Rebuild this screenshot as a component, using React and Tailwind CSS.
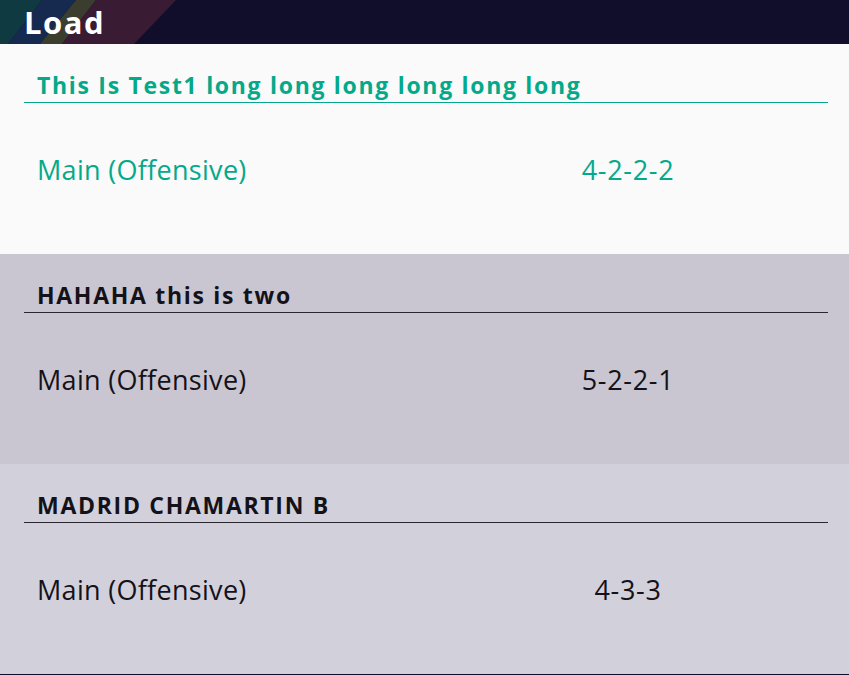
import React from 'react';

const cards = [
  { title: 'This Is Test1 long long long long long long', name: 'Main (Offensive)', formation: '4-2-2-2', active: true, bg: 'bg-[#fafafa]' },
  { title: 'HAHAHA this is two', name: 'Main (Offensive)', formation: '5-2-2-1', bg: 'bg-[#c9c6d1]' },
  { title: 'MADRID CHAMARTIN B', name: 'Main (Offensive)', formation: '4-3-3', bg: 'bg-[#d1d0db]' },
];

const Stripes = () => (
  <svg className="absolute inset-0 h-full w-[200px]" viewBox="0 0 200 44" preserveAspectRatio="none">
    <polygon points="0,0 42,0 8,44 0,44" fill="#0f3a42" />
    <polygon points="42,0 76,0 40,44 8,44" fill="#162a50" />
    <polygon points="76,0 96,0 62,44 40,44" fill="#3b3d2f" />
    <polygon points="96,0 176,0 134,44 62,44" fill="#391b33" />
  </svg>
);

const Card = ({ card }) => {
  const color = card.active ? 'text-[#04a98a]' : 'text-[#141218]';
  const line = card.active ? 'border-[#04a98a]' : 'border-[#2a2630]';
  return (
    <div className={`h-[210px] ${card.bg}`}>
      <div className={`ml-[24px] mr-[21px] h-[59px] flex items-end border-b ${line}`}>
        <span className={`pl-[13px] pb-[3px] text-[23px] leading-[28px] font-bold tracking-[1.7px] whitespace-nowrap ${color}`}>{card.title}</span>
      </div>
      <div className={`h-[135px] flex items-center text-[27px] tracking-[0.3px] ${color}`}>
        <span className="pl-[37px] w-[528px]">{card.name}</span>
        <span className="w-[200px] text-center tracking-[0.7px]">{card.formation}</span>
      </div>
    </div>
  );
};

export default function App() {
  return (
    <div className="w-[849px] h-[675px] overflow-hidden bg-[#110e2b]" style={{ fontFamily: '"Open Sans", "Noto Sans", sans-serif' }}>
      <div className="relative h-[44px] bg-[#110e2b] overflow-hidden">
        <Stripes />
        <div className="relative pl-[24px] text-white text-[31px] font-bold tracking-[1.5px] leading-[44px]">Load</div>
      </div>
      {cards.map((c) => (
        <Card key={c.title} card={c} />
      ))}
    </div>
  );
}
